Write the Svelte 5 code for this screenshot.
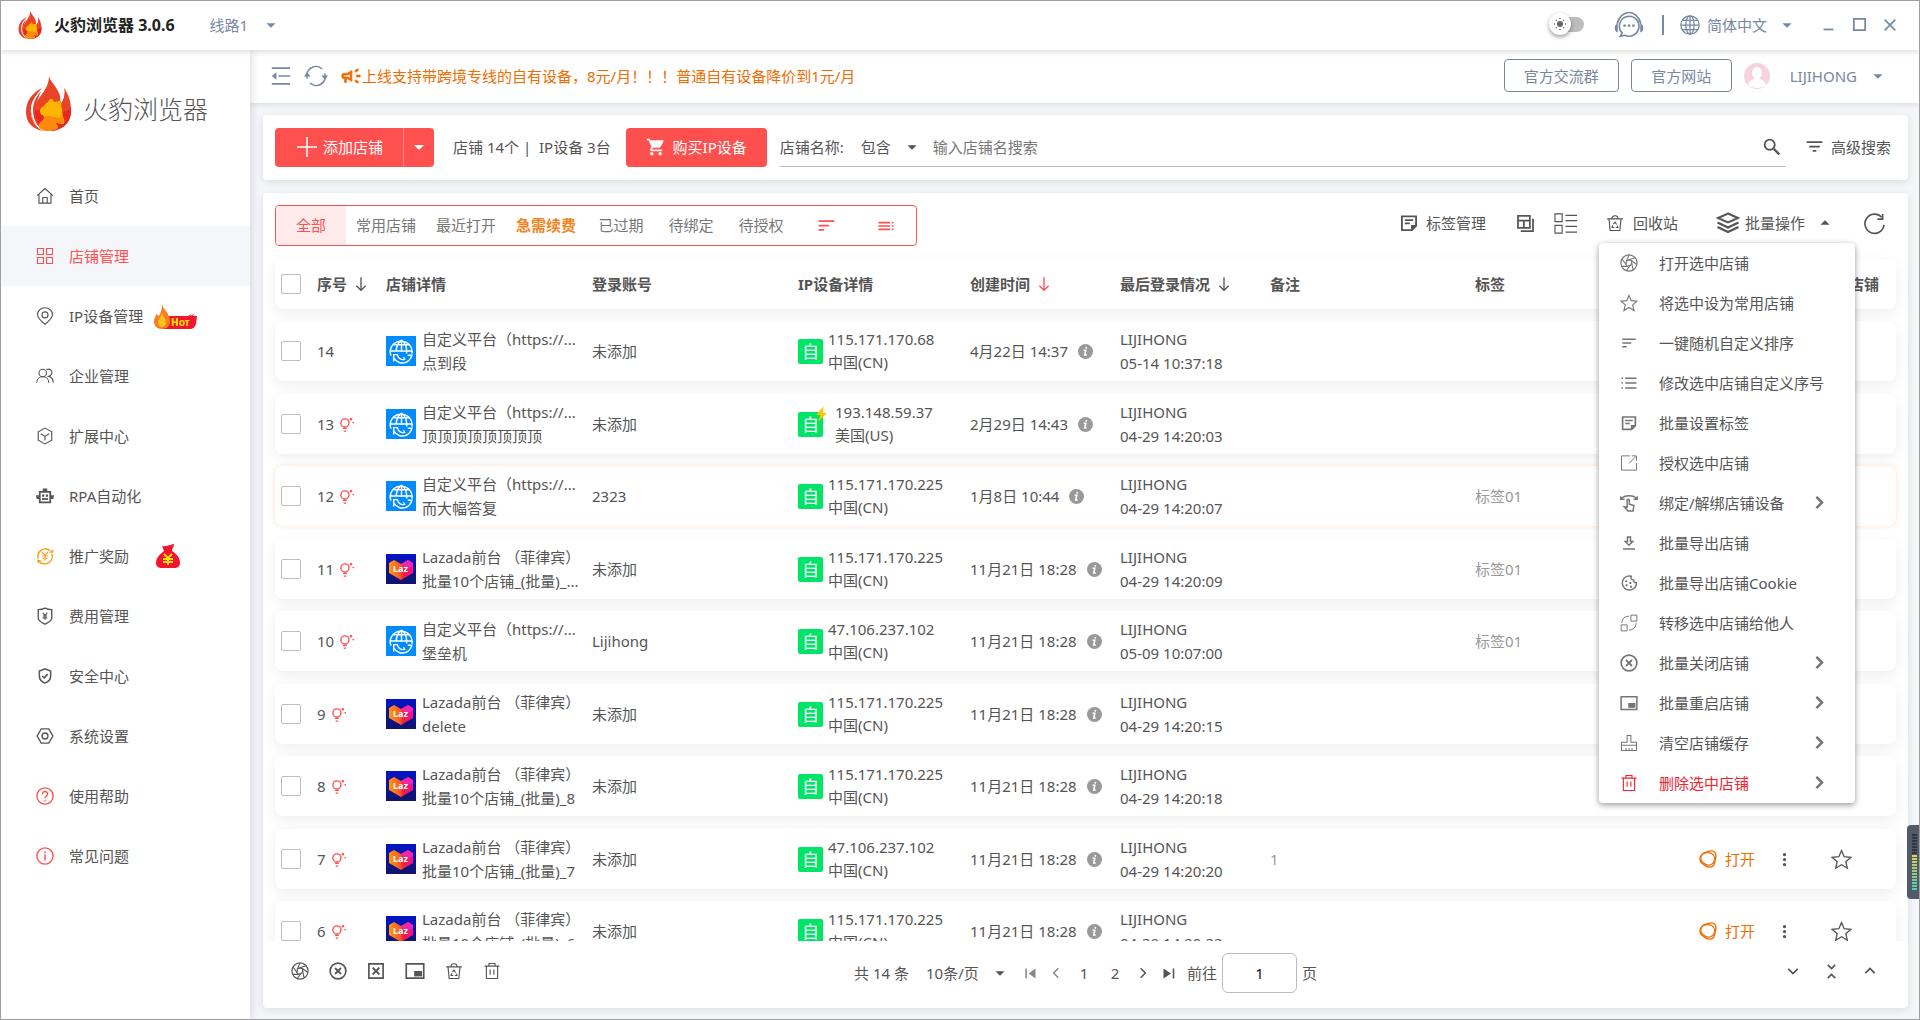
<script>
    const icons = {
        caret: '<path d="M7 10l5 5 5-5z" fill="currentColor" stroke="none"/>',
        caretUp: '<path d="M7 14l5-5 5 5z" fill="currentColor" stroke="none"/>',
        headset: '<path d="M2.500 11C4 5 8 2 12 2s8 3 9.500 9" stroke-width="1.300"/><path d="M3 10.500V18c-3-.5-3.500-6 0-7.500zM21 10.500V18c3-.5 3.500-6 0-7.500z" fill="currentColor" stroke="none"/><path d="M12 5a8 8 0 1 1-3.500 15.200L5 21l1.500-2.500A8 8 0 0 1 12 5z" stroke-width="1.300"/><path d="M7.500 12.500h2M11 12.500h2M14.500 12.500h2" stroke-width="1.800"/>',
        globe: '<circle cx="12" cy="12" r="11"/><ellipse cx="12" cy="12" rx="5" ry="11"/><path d="M12 1v22M1 12h22M3 6.500h18M3 17.500h18"/>',
        minimize: '<path d="M5 19h14" stroke-width="2.500"/>',
        maximize: '<path d="M4 4h16v16H4z" stroke-width="2.500"/>',
        close: '<path d="M4 4l16 16M20 4L4 20" stroke-width="2.500"/>',
        collapse: '<path d="M1 2.500h22M9 12h14M1 21.500h22" stroke-width="2"/><path d="M6.500 7.500v9L1 12z" fill="currentColor" stroke="none"/>',
        sync: '<path d="M3.300 14.500A9 9 0 0 1 18 5M20.700 9.500A9 9 0 0 1 6 19" stroke-width="1.600"/><path d="M0 12.500h6.500L3 8zM17.500 11.500H24L21 16z" fill="currentColor" stroke="none"/>',
        horn: '<path d="M18 11v2h4v-2h-4zm-2 6.610c.96.71 2.210 1.650 3.200 2.390.4-.53.8-1.070 1.200-1.600-.99-.74-2.240-1.680-3.200-2.400-.4.54-.8 1.080-1.200 1.610zM20.400 5.600c-.4-.53-.8-1.070-1.200-1.600-.99.74-2.240 1.680-3.200 2.400.4.53.8 1.070 1.200 1.600.96-.72 2.210-1.650 3.200-2.400zM4 9c-1.100 0-2 .9-2 2v2c0 1.100.9 2 2 2h1v4h2v-4h1l5 3V6L8 9H4zm5 1.700L11 9.500v5l-2.500-1.500H4v-2h4.500z" fill="currentColor" stroke-width="0.800"/>',
        plus: '<path d="M12 2v20M2 12h20"/>',
        cart: '<path d="M7 18c-1.100 0-2 .9-2 2s.9 2 2 2 2-.9 2-2-.9-2-2-2zM1 2v2h2l3.600 7.590-1.350 2.450C4.500 15.500 5.500 17 7 17h12v-2H7.400c-.2 0-.3-.2-.2-.4l.9-1.600h7.450c.75 0 1.410-.41 1.750-1.030l3.580-6.490A1 1 0 0 0 20 4H5.200l-.94-2H1zm16 16c-1.100 0-2 .9-2 2s.9 2 2 2 2-.9 2-2-.9-2-2-2z" fill="currentColor" stroke="none"/>',
        search: '<circle cx="9.500" cy="9.500" r="5.500" stroke-width="2"/><path d="M14 14l6 6" stroke-width="2.500"/>',
        filter: '<path d="M10 18h4v-2h-4v2zM3 6v2h18V6H3zm3 7h12v-2H6v2z" fill="currentColor" stroke="none"/>',
        sort: '<path d="M3 18h6v-2H3v2zM3 6v2h18V6H3zm0 7h12v-2H3v2z" fill="currentColor" stroke="none"/>',
        toc: '<path d="M3 9h14V7H3v2zm0 4h14v-2H3v2zm0 4h14v-2H3v2zm16 0h2v-2h-2v2zm0-10v2h2V7h-2zm0 6h2v-2h-2v2z" fill="currentColor" stroke="none"/>',
        note: '<path d="M3.500 4h17v11.500l-5 5h-12z" stroke-width="2.200"/><path d="M20.500 14.500v1l-5 5h-1v-6z" fill="currentColor" stroke="none"/><path d="M7 8.500h10M7 12.500h6" stroke-width="2"/>',
        columns: '<path d="M2.500 2.500h15v15h-15zM2.500 8.500h15M10 8.500v9" stroke-width="2.200"/><path d="M21.500 6v15.500H6" stroke-width="2.200"/>',
        grid: '<path d="M1 2h7.500v8H1zM1 14h7.500v8H1zM12 3.500h12M12 9h12M12 15h12M12 21h12" stroke-width="1.200"/>',
        recycle: '<path d="M1.500 6.500h21M4 6.500L5.500 22h13L20 6.500M8 6c0-5 8-5 8 0"/><path d="M12 10.500l-2 3M12 10.500l2.200 3.500M9 15l-1 3h3M13 18h3l-1-2.500"/>',
        layers: '<path d="M12 2.500l10 4.500-10 4.500L2 7z" stroke-width="2"/><path d="M1.500 11.500L12 16.500l10.500-5M1.500 16L12 21l10.500-5" stroke-width="2.200"/>',
        reload: '<path d="M22 13.500A10 10 0 1 1 19.500 5.500" stroke-width="1.700"/><path d="M20.500 2v5.500H15" stroke-width="1.700"/>',
        home: '<path d="M1.500 11.500L12 2l10.500 9.500M4 10v11.500h16V10M9 21v-7h6v7" stroke-linejoin="round"/>',
        shops: '<path d="M2 2h8v8H2zM14 2h8v8h-8zM2 14h8v8H2zM14 14h8v8h-8z"/>',
        pin: '<path d="M12 23c-5-4-10-8-10-13a10 9 0 0 1 20 0c0 5-5 9-10 13z"/><circle cx="12" cy="10.500" r="4"/>',
        users: '<circle cx="9" cy="8" r="5"/><path d="M1 21c0-5 3.500-8 8-8s8 3 8 8M14 3.500c4-2 8 1 7 5-.5 2-2 3.500-4 4 3.500 1 6 4 6 8.500"/>',
        cube: '<path d="M12 1.500l9 5v11l-9 5-9-5v-11zM6.500 9l5.500 3.500L17.500 9M12 12.500V18"/>',
        robot: '<path d="M5 6.500h14v14H5z" stroke-width="2.400"/><path d="M8 16h8" stroke-width="2.400"/><path d="M0 11h4v5H1zM20 11h4l-1 5h-3zM8 10h3v3H8zM13 10h3v3h-3zM9 2h6v4H9z" fill="currentColor" stroke="none"/>',
        reward: '<path d="M3 15.500A10 10 0 0 1 19 5M21 9a10 10 0 0 1-16.500 10.500" stroke-width="2"/><path d="M17 7.500h6V3zM1 16.500l6 1-4 4.500z" fill="currentColor" stroke="none"/><path d="M8 6.500l4 5 4-5M12 11.500V18M8.500 12h7M8.500 15h7"/>',
        fee: '<path d="M12 1.500c3 1.500 6 2 9 2V15c0 4-6 6-9 8-3-2-9-4-9-8V3.500c3 0 6-.5 9-2z" stroke-width="1.800"/><path d="M9 7.500l3 4 3-4M12 11.500V17M9 12h6M9 14.500h6"/>',
        shield: '<path d="M12 2.500l7.500 3V12c0 4.500-3.500 8-7.500 9.500C8 20 4.500 16.500 4.500 12V5.500z" stroke-width="2"/><path d="M8.500 12l2.500 2.500 4.500-5" stroke-width="2"/>',
        setting: '<path d="M7 2.500h10L22.500 12 17 21.500H7L1.500 12z" stroke-width="1.800"/><circle cx="12" cy="12" r="4" stroke-width="1.800"/>',
        help: '<circle cx="12" cy="12" r="10.800" stroke-width="1.800"/><path d="M8.500 9.500c0-5 7.500-4.500 7 0-.3 2.500-3.500 2.500-3.500 5.500M12 17v2" stroke-width="1.800"/>',
        info: '<circle cx="12" cy="12" r="10.800" stroke-width="1.800"/><path d="M12 6v2M12 10v8" stroke-width="2"/>',
        arrow: '<path d="M12 2v19M5 14.500l7 7 7-7" stroke-width="2"/>',
        bulb: '<circle cx="9.500" cy="9.500" r="6.500" stroke-width="2.200"/><path d="M6.500 18h6M7.500 22.500h4" stroke-width="2.200"/><path d="M19 1.500v4M17 3.500h4M21.500 9h2.500" stroke-width="2.200"/>',
        infoFill: '<circle cx="12" cy="12" r="12" fill="#999" stroke="none"/><path d="M13.500 4.500l-.6 2.800M9 10h3.500l-1.700 7.500H14" stroke="#fff" stroke-width="2.600"/>',
        aperture: '<circle cx="12" cy="12" r="10.800"/><path d="M12 1.500l-3.500 8M20 5l-9 3M22.500 14l-7-5M17.500 21l-2-9M8.500 22l5-7M2 16.500h8M3 7l5 7"/><path d="M8.500 9.500L11 8l4.500 1v4l-2 2.500-4 1L8 14z"/>',
        star: '<path d="M12 1.800l3 7 7.700.7-5.800 5 1.800 7.500-6.700-4-6.700 4 1.800-7.500-5.800-5L9 8.800z"/>',
        list: '<path d="M7 5.500h15M7 12h15M7 18.500h15M2 5.500h2M2 12h2M2 18.500h2" stroke-width="2"/>',
        share: '<path d="M13 2.500H2v19h20V12M12 12.500L21.500 3M15.500 2.500H22V9" stroke-width="1.300"/>',
        touch: '<path d="M1 3v4h5M1.500 6.500C6 1 18 1 22.500 6.500M23 3v4h-5" stroke-width="1.800"/><path d="M9.500 17.500V8.500c0-2 3-2 3 0v5l6 2-1 7h-7L5.500 17z" stroke-width="2"/>',
        download: '<path d="M10 4h4v6h3l-5 5-5-5h3zM4 20h16" stroke-width="2"/>',
        cookie: '<path d="M12 2.500a9.500 9.500 0 1 0 10 9c-3 0-4-1.500-4-3.500-3 0-4-2-3-5-1-.4-2-.5-3-.5z" stroke-width="2"/><path d="M7 9.500h2.500M7.500 15H10M13.500 17H16M12.500 12H15" stroke-width="2.400"/>',
        transfer: '<path d="M14.500 1.500h8v8h-8zM1.500 14.500h8v8h-8zM12 3C6 3 3 6 2.500 12M12 21.500c6-.5 9-3.500 9.500-9.500" stroke-width="1.300"/>',
        closeCircle: '<circle cx="12" cy="12" r="10.500" stroke-width="2.200"/><path d="M8 8l8 8M16 8l-8 8" stroke-width="2.400"/>',
        closeBox: '<path d="M2.500 2.500h19v19h-19z" stroke-width="2.200"/><path d="M7.500 7.500l9 9M16.500 7.500l-9 9" stroke-width="2.800"/>',
        pip: '<path d="M1.500 3.500h21v17h-21z" stroke-width="2"/><path d="M11 12h9.500v6.500H11z" fill="currentColor" stroke="none"/>',
        broom: '<path d="M9.500 11V2h5v9H22v11H2V11zM2 15h20M8 22v-3.500M12 22v-3.500M16 22v-3.500" stroke-width="1.400"/>',
        trash: '<path d="M2 5.500h20M8 5V2h8v3M4.500 5.500V22h15V5.500M9.500 10v7M14.500 10v7"/>',
        right: '<path d="M7 3l9 9-9 9" stroke-width="4"/>',
        chevDown: '<path d="M4 8.500l8 8 8-8" stroke-width="3"/>',
        chevUp: '<path d="M4 15.500l8-8 8 8" stroke-width="3"/>',
        fold: '<path d="M6 1.500l6 6 6-6M6 22.500l6-6 6 6" stroke-width="2.600"/>',
        first: '<path d="M5 4v16" stroke-width="2.500"/><path d="M20 4v16l-11-8z" fill="currentColor" stroke="none"/>',
        last: '<path d="M20 4v16" stroke-width="2.500"/><path d="M4 4v16l12-8z" fill="currentColor" stroke="none"/>',
        prev: '<path d="M16 4l-8 8 8 8" stroke-width="2.600"/>',
        next: '<path d="M8 4l8 8-8 8" stroke-width="2.600"/>',
        open: '<path d="M5 5C9 3 15-1 20 2c3 2 3 6 2 10s-1 9-5 10.500-9-1.500-13-5-3.500-9 1-12.500z" stroke-width="1.800"/><path d="M8 4c4-1 9-1 12 4s-1 11-5 12-12-3-12.500-8S5 5 8 4z" stroke-width="1.600"/>',
        more: '<g fill="currentColor" stroke="none"><circle cx="12" cy="4" r="2.600"/><circle cx="12" cy="12" r="2.600"/><circle cx="12" cy="20" r="2.600"/></g>',
        webShop: '<path d="M2 16A10.500 10 0 1 1 22 14M12 1v11.500M1.500 11.500h21M4.500 5.500h15M12 1C8 4 7 7 7 11.500M12 1c4 3 5 6 5 13" stroke-width="1.400"/><path d="M4.500 14.500v7M4.500 15h3.500c1 4 4 5.500 7 4.500l-1-2M5 18.500c2 4 7 5.500 11 4 3-1 5-3.500 6-7h-4" stroke-width="1.400"/>'
    };

    const navItems = [
        { icon: 'home', label: '首页' },
        { icon: 'shops', label: '店铺管理', active: true },
        { icon: 'pin', label: 'IP设备管理', badge: 'hot' },
        { icon: 'users', label: '企业管理' },
        { icon: 'cube', label: '扩展中心' },
        { icon: 'robot', label: 'RPA自动化' },
        { icon: 'reward', label: '推广奖励', tone: 'amber', badge: 'bag' },
        { icon: 'fee', label: '费用管理' },
        { icon: 'shield', label: '安全中心' },
        { icon: 'setting', label: '系统设置' },
        { icon: 'help', label: '使用帮助', tone: 'red' },
        { icon: 'info', label: '常见问题', tone: 'red' }
    ];

    const batchItems = [
        { icon: 'aperture', label: '打开选中店铺' },
        { icon: 'star', label: '将选中设为常用店铺' },
        { icon: 'sort', label: '一键随机自定义排序' },
        { icon: 'list', label: '修改选中店铺自定义序号' },
        { icon: 'note', label: '批量设置标签' },
        { icon: 'share', label: '授权选中店铺' },
        { icon: 'touch', label: '绑定/解绑店铺设备', more: true },
        { icon: 'download', label: '批量导出店铺' },
        { icon: 'cookie', label: '批量导出店铺Cookie' },
        { icon: 'transfer', label: '转移选中店铺给他人' },
        { icon: 'closeCircle', label: '批量关闭店铺', more: true },
        { icon: 'pip', label: '批量重启店铺', more: true },
        { icon: 'broom', label: '清空店铺缓存', more: true },
        { icon: 'trash', label: '删除选中店铺', more: true, danger: true }
    ];

    const custom = '自定义平台（https://...';
    const lazada = 'Lazada前台 （菲律宾）';

    const rows = [
        { no: 14, kind: 'web', shop: custom, name: '点到段', account: '未添加', ip: '115.171.170.68', area: '中国(CN)', created: '4月22日 14:37', login: '05-14 10:37:18' },
        { no: 13, kind: 'web', shop: custom, name: '顶顶顶顶顶顶顶顶', account: '未添加', ip: '193.148.59.37', area: '美国(US)', fast: true, created: '2月29日 14:43', login: '04-29 14:20:03' },
        { no: 12, kind: 'web', shop: custom, name: '而大幅答复', account: '2323', ip: '115.171.170.225', area: '中国(CN)', created: '1月8日 10:44', login: '04-29 14:20:07', tag: '标签01' },
        { no: 11, kind: 'laz', shop: lazada, name: '批量10个店铺_(批量)_...', account: '未添加', ip: '115.171.170.225', area: '中国(CN)', created: '11月21日 18:28', login: '04-29 14:20:09', tag: '标签01' },
        { no: 10, kind: 'web', shop: custom, name: '堡垒机', account: 'Lijihong', ip: '47.106.237.102', area: '中国(CN)', created: '11月21日 18:28', login: '05-09 10:07:00', tag: '标签01' },
        { no: 9, kind: 'laz', shop: lazada, name: 'delete', account: '未添加', ip: '115.171.170.225', area: '中国(CN)', created: '11月21日 18:28', login: '04-29 14:20:15' },
        { no: 8, kind: 'laz', shop: lazada, name: '批量10个店铺_(批量)_8', account: '未添加', ip: '115.171.170.225', area: '中国(CN)', created: '11月21日 18:28', login: '04-29 14:20:18' },
        { no: 7, kind: 'laz', shop: lazada, name: '批量10个店铺_(批量)_7', account: '未添加', ip: '47.106.237.102', area: '中国(CN)', created: '11月21日 18:28', login: '04-29 14:20:20', remark: '1' },
        { no: 6, kind: 'laz', shop: lazada, name: '批量10个店铺_(批量)_6', account: '未添加', ip: '115.171.170.225', area: '中国(CN)', created: '11月21日 18:28', login: '04-29 14:20:22' }
    ];

    const tabs = ['全部', '常用店铺', '最近打开', '急需续费', '已过期', '待绑定', '待授权'];

    let activeTab = $state('全部');
    let menuOpen = $state(true);
    let hovered = $state(12);
    let keyword = $state('');
    let page = $state(1);
</script>

{#snippet icon(name, size)}
    <svg class="icon" viewBox="0 0 24 24" width={size} height={size} aria-hidden="true">{@html icons[name]}</svg>
{/snippet}

{#snippet flame(width, height)}
    <svg class="flame" viewBox="0 0 45 55" {width} {height} aria-hidden="true">
        <path d="M17 55C6 53 0 46 0 36 0 25 6 17 16 12 8 21 4 29 5 38c1 8 6 14 12 17z" fill="#e8402a" />
        <path d="M15 52C8 48 4 41 5 33c1-7 5-12 10-18-2 6-5 11-5 18 0 8 2 14 5 19z" fill="#e8402a" />
        <path d="M5 33c0 9 4 16 10 20C9 47 7 41 7 34c0-7 3-13 8-19-6 5-10 11-10 18z" fill="#fff" />
        <path d="M23 0c2 8 12 13 12 27 3-4 4-9 3-15 5 7 7 14 7 23 0 12-9 20-22 20C14 55 9 44 9 34 9 21 23 16 23 0z" fill="#ea4428" />
        <path d="M35 27c3-4 4-9 3-15l-2-1c1 5 0 9-2 12z" fill="#fff" />
        <path d="M9 34c0 10 4 19 14 21 13 0 22-8 22-20v-4c-4 6-10 5-16 5z" fill="#e6281f" />
        <path d="M24 23c2-1 3 0 4 3l6-1c1 2 2 3 1 5 2 4 1 8 2 11 1 2 2 4 1 6-1 2-4 1-6 0-1-1-2-1-3 0 2 1 3 3 3 5-8 5-17 3-19-1-1-5 6-6 5-10-1-3-4-1-4-6 0-3 2-4 4-5 1-3 4-3 6-7z" fill="#ffb400" />
        <path d="M18 41c5-3 12 2 18 0l2 5c0 2-4 1-6 1l-3 0c2 1 3 3 3 5-8 5-17 3-19-1 0-4 5-6 5-10z" fill="#ff8a0c" />
    </svg>
{/snippet}

<div class="window">
    <header class="titlebar">
        {@render flame(24, 28)}
        <strong class="app-name">火豹浏览器 3.0.6</strong>
        <label class="pick line-pick">
            <select aria-label="线路"><option>线路1</option></select>
            {@render icon('caret', 22)}
        </label>
        <div class="window-tools">
            <label class="theme">
                <input type="checkbox" aria-label="主题" />
                <span class="thumb">
                    <svg viewBox="0 0 22 22" width="22" height="22" aria-hidden="true">
                        <circle cx="11" cy="11" r="3" fill="#666" />
                        <path d="M11 5v1M11 16v1M5 11h1M16 11h1M7 7l.7.7M14.300 14.300l.7.7M7 15l.7-.7M14.300 7.700L15 7" stroke="#666" stroke-width="1.400" />
                    </svg>
                </span>
            </label>
            <button class="plain headset" aria-label="客服">{@render icon('headset', 30)}</button>
            <span class="divider"></span>
            {@render icon('globe', 20)}
            <label class="pick lang-pick">
                <select aria-label="语言"><option>简体中文</option></select>
                {@render icon('caret', 22)}
            </label>
            <div class="window-buttons">
                <button class="plain" aria-label="最小化">{@render icon('minimize', 17)}</button>
                <button class="plain" aria-label="最大化">{@render icon('maximize', 17)}</button>
                <button class="plain" aria-label="关闭">{@render icon('close', 16)}</button>
            </div>
        </div>
    </header>

    <div class="body">
        <aside class="sidebar">
            <div class="brand">
                {@render flame(45, 55)}
                <span>火豹浏览器</span>
            </div>
            <nav>
                {#each navItems as item}
                    <a href="#{item.icon}" class:active={item.active}>
                        <span class="nav-icon {item.tone}">{@render icon(item.icon, 18)}</span>
                        {item.label}
                        {#if item.badge === 'hot'}
                            <svg class="hot" viewBox="0 0 43 25" width="43" height="25" aria-hidden="true">
                                <path d="M10 12h24l3-2-1 2 4-2-1 2h4l-1 8c-1 3-3 5-6 5H8z" fill="#f5142d" />
                                <path d="M8 0c1 6 8 9 8 17 0 5-3 8-8 8s-8-3-8-8c0-3 2-4 2-7l3 2c2-4 3-7 3-12z" fill="#f77f1e" />
                                <path d="M8 9c1 4 4 5 4 10 0 2-2 4-4 4s-4-2-4-5 3-4 4-9z" fill="#ffc21e" />
                                <text x="17" y="22" font-size="10" font-weight="800" fill="#ffe600">H<tspan font-size="8">OT</tspan></text>
                            </svg>
                        {:else if item.badge === 'bag'}
                            <svg class="bag" viewBox="0 0 24 24" width="24" height="24" aria-hidden="true">
                                <path d="M6 2c4 1 5-1 9-1 1-1 2-1 3-1 0 3-2 4-2 7 5 3 8 7 8 12 0 4-3 5-6 5H6c-3 0-6-1-6-5 0-5 4-9 8-12z" fill="#f5142d" />
                                <path d="M8 10l4 4 4-4M12 14v7M7 15h10M7 18h10" fill="none" stroke="#ffe600" stroke-width="1.800" />
                            </svg>
                        {/if}
                    </a>
                {/each}
            </nav>
        </aside>

        <main>
            <div class="topbar">
                <button class="plain" aria-label="收起菜单">{@render icon('collapse', 20)}</button>
                <button class="plain sync" aria-label="刷新">{@render icon('sync', 24)}</button>
                <p class="notice">
                    {@render icon('horn', 22)}
                    <span>上线支持带跨境专线的自有设备，8元/月！！！普通自有设备降价到1元/月</span>
                </p>
                <button class="outline wide">官方交流群</button>
                <button class="outline">官方网站</button>
                <button class="plain user">
                    <svg viewBox="0 0 26 26" width="26" height="26" aria-hidden="true">
                        <circle cx="13" cy="13" r="13" fill="#f6d3df" />
                        <ellipse cx="13" cy="10" rx="5" ry="6" fill="#fff" />
                        <path d="M4 22c1-5 5-5 7-7h4c2 2 6 2 7 7-2 2-5 3-9 3s-7-1-9-3z" fill="#fff" />
                    </svg>
                    <span>LIJIHONG</span>
                    {@render icon('caret', 22)}
                </button>
            </div>

            <section class="card search-card">
                <div class="split">
                    <button class="add">{@render icon('plus', 24)}添加店铺</button>
                    <button class="add-more" aria-label="更多">{@render icon('caret', 24)}</button>
                </div>
                <span class="count">店铺 14个 |&nbsp; IP设备 3台</span>
                <button class="buy">{@render icon('cart', 20)}购买IP设备</button>
                <div class="search">
                    <label for="keyword">店铺名称:</label>
                    <label class="pick match-pick">
                        <select aria-label="匹配方式"><option>包含</option></select>
                        {@render icon('caret', 22)}
                    </label>
                    <input id="keyword" type="text" placeholder="输入店铺名搜索" bind:value={keyword} />
                    <button class="plain" aria-label="搜索">{@render icon('search', 22)}</button>
                </div>
                <button class="plain advanced">{@render icon('filter', 21)}高级搜索</button>
            </section>

            <section class="card list-card">
                <div class="toolbar">
                    <div class="tabs">
                        {#each tabs as tab}
                            <button
                                class:active={tab === activeTab}
                                class:long={tab.length > 3}
                                class:urgent={tab === '急需续费'}
                                onclick={() => (activeTab = tab)}>{tab}</button>
                        {/each}
                        <button class="sort" aria-label="排序">{@render icon('sort', 21)}</button>
                        <button class="sort" aria-label="列表">{@render icon('toc', 20)}</button>
                    </div>
                    <div class="tools">
                        <button class="plain tag-tool">{@render icon('note', 20)}标签管理</button>
                        <button class="plain" aria-label="列设置">{@render icon('columns', 19)}</button>
                        <button class="plain grid-tool" aria-label="视图">{@render icon('grid', 23)}</button>
                        <button class="plain bin-tool">{@render icon('recycle', 18)}回收站</button>
                        <div class="batch">
                            <button class="plain" onclick={() => (menuOpen = !menuOpen)}>
                                {@render icon('layers', 24)}<span>批量操作</span>{@render icon('caretUp', 22)}
                            </button>
                            {#if menuOpen}
                                <ul class="menu">
                                    {#each batchItems as item}
                                        <li>
                                            <button class="plain" class:danger={item.danger}>
                                                <span class="menu-icon">{@render icon(item.icon, 18)}</span>
                                                {item.label}
                                                {#if item.more}
                                                    <span class="menu-more">{@render icon('right', 15)}</span>
                                                {/if}
                                            </button>
                                        </li>
                                    {/each}
                                </ul>
                            {/if}
                        </div>
                        <button class="plain" aria-label="重新加载">{@render icon('reload', 23)}</button>
                    </div>
                </div>

                <div class="table-wrap">
                    <table>
                        <thead>
                            <tr>
                                <th><input type="checkbox" aria-label="全选" /></th>
                                <th>序号{@render icon('arrow', 16)}</th>
                                <th>店铺详情</th>
                                <th>登录账号</th>
                                <th>IP设备详情</th>
                                <th>创建时间<span class="sorted">{@render icon('arrow', 16)}</span></th>
                                <th>最后登录情况{@render icon('arrow', 16)}</th>
                                <th>备注</th>
                                <th>标签</th>
                                <th>操作</th>
                                <th>常用店铺</th>
                            </tr>
                        </thead>
                        <tbody>
                            {#each rows as row}
                                <tr class:hovered={row.no === hovered} onmouseenter={() => (hovered = row.no)}>
                                    <td><input type="checkbox" aria-label="选择 {row.no}" /></td>
                                    <td class="no">
                                        {row.no}
                                        {#if row.no !== 14}{@render icon('bulb', 15)}{/if}
                                    </td>
                                    <td class="shop">
                                        {#if row.kind === 'web'}
                                            <span class="logo web">{@render icon('webShop', 25)}</span>
                                        {:else}
                                            <svg class="logo" viewBox="0 0 30 30" width="30" height="30" aria-hidden="true">
                                                <defs>
                                                    <linearGradient id="heart"><stop offset="0" stop-color="#ff9a00" /><stop offset=".45" stop-color="#fb5a2e" /><stop offset=".6" stop-color="#f0203c" /><stop offset="1" stop-color="#f50a9c" /></linearGradient>
                                                    <linearGradient id="night" x2="0" y2="1"><stop offset="0" stop-color="#0214c8" /><stop offset="1" stop-color="#10146a" /></linearGradient>
                                                </defs>
                                                <path d="M0 0h30v30H0z" fill="url(#night)" />
                                                <path d="M3 9l5-3 7 4 7-4 5 3v10L15 26 3 19z" fill="url(#heart)" />
                                                <path d="M15 10l7-4 5 3v3l-7 3z" fill="#f02ad0" opacity=".7" />
                                                <text x="7" y="18" font-size="9" font-weight="700" fill="#fff">Laz</text>
                                            </svg>
                                        {/if}
                                        <div>
                                            <div>{row.shop}</div>
                                            <div>{row.name}</div>
                                        </div>
                                    </td>
                                    <td>{row.account}</td>
                                    <td class="device" class:fast={row.fast}>
                                        <span class="own">自
                                            {#if row.fast}
                                                <svg class="bolt" viewBox="0 0 10 14" width="11" height="16" aria-hidden="true"><path d="M7 0L0 8h4l-2 6 8-8H6z" fill="#ffc400" /></svg>
                                            {/if}
                                        </span>
                                        <div>
                                            <div>{row.ip}</div>
                                            <div>{row.area}</div>
                                        </div>
                                    </td>
                                    <td class="created">{row.created}{@render icon('infoFill', 15)}</td>
                                    <td class="login">
                                        <div>
                                            <div>LIJIHONG</div>
                                            <div>{row.login}</div>
                                        </div>
                                    </td>
                                    <td class="muted">{row.remark ?? ''}</td>
                                    <td class="muted">{row.tag ?? ''}</td>
                                    <td class="actions">
                                        <button class="plain open">{@render icon('open', 18)}打开</button>
                                        <button class="plain" aria-label="更多">{@render icon('more', 15)}</button>
                                    </td>
                                    <td class="fav"><button class="plain" aria-label="设为常用">{@render icon('star', 21)}</button></td>
                                </tr>
                            {/each}
                        </tbody>
                    </table>
                </div>

                <footer>
                    <div class="bulk">
                        <button class="plain" aria-label="打开">{@render icon('aperture', 18)}</button>
                        <button class="plain" aria-label="关闭店铺">{@render icon('closeCircle', 18)}</button>
                        <button class="plain" aria-label="全部关闭">{@render icon('closeBox', 18)}</button>
                        <button class="plain" aria-label="重启">{@render icon('pip', 20)}</button>
                        <button class="plain" aria-label="回收">{@render icon('recycle', 18)}</button>
                        <button class="plain" aria-label="删除">{@render icon('trash', 18)}</button>
                    </div>
                    <div class="pager">
                        <span>共 14 条</span>
                        <label class="pick size-pick">
                            <select aria-label="每页条数"><option>10条/页</option></select>
                            {@render icon('caret', 22)}
                        </label>
                        <button class="plain dim" aria-label="首页">{@render icon('first', 15)}</button>
                        <button class="plain dim" aria-label="上一页">{@render icon('prev', 14)}</button>
                        <button class="plain num">1</button>
                        <button class="plain num">2</button>
                        <button class="plain" aria-label="下一页">{@render icon('next', 14)}</button>
                        <button class="plain" aria-label="末页">{@render icon('last', 15)}</button>
                        <label class="jump">前往<input type="text" bind:value={page} />页</label>
                    </div>
                    <div class="folds">
                        <button class="plain" aria-label="向下">{@render icon('chevDown', 14)}</button>
                        <button class="plain" aria-label="折叠">{@render icon('fold', 15)}</button>
                        <button class="plain" aria-label="向上">{@render icon('chevUp', 14)}</button>
                    </div>
                </footer>
            </section>
        </main>
    </div>

    <div class="meter"><span></span></div>
</div>

<style>
    :global(body) {
        margin: 0;
    }

    .window {
        position: relative;
        box-sizing: border-box;
        height: 100vh;
        display: flex;
        flex-direction: column;
        border: 1px solid #a0a0a0;
        background: #f5f6fa;
        overflow: hidden;
        color: #555;
        font-family: "Noto Sans", "Noto Sans CJK SC", sans-serif;
        font-size: 15px;
        line-height: 24px;
    }

    .window :global(.icon) {
        display: block;
        flex-shrink: 0;
        fill: none;
        stroke: currentColor;
        stroke-width: 1.5;
    }

    button,
    input,
    select {
        font: inherit;
        color: inherit;
        margin: 0;
    }

    button {
        cursor: pointer;
        white-space: nowrap;
    }

    .plain {
        display: flex;
        align-items: center;
        padding: 0;
        border: none;
        background: none;
    }

    .pick {
        display: flex;
        align-items: center;
    }

    .pick select {
        appearance: none;
        border: none;
        background: none;
        padding: 0;
        outline: none;
    }

    /* title bar */
    .titlebar {
        display: flex;
        align-items: center;
        height: 49px;
        flex-shrink: 0;
        box-sizing: border-box;
        padding: 0 21px 2px 17px;
        background: #fff;
        box-shadow: 0 2px 6px rgba(0, 0, 0, 0.14);
        color: #7888a2;
        z-index: 3;
    }

    .flame {
        flex-shrink: 0;
    }

    .app-name {
        margin-left: 12px;
        color: #222;
        font-size: 16px;
    }

    .line-pick {
        margin-left: 35px;
        gap: 11px;
    }

    .window-tools {
        display: flex;
        align-items: center;
        margin-left: auto;
    }

    .theme {
        position: relative;
        width: 35px;
        height: 15px;
        border-radius: 8px;
        background: linear-gradient(90deg, transparent 10px, #bdbdbd 10px);
    }

    .theme input {
        position: absolute;
        inset: 0;
        opacity: 0;
    }

    .thumb {
        position: absolute;
        top: -4px;
        left: 0;
        width: 22px;
        height: 22px;
        border-radius: 50%;
        background: #fff;
        box-shadow: 0 2px 4px rgba(0, 0, 0, 0.4);
    }

    .headset {
        margin-left: 30px;
    }

    .divider {
        width: 2px;
        height: 20px;
        margin: 0 16px 0 18px;
        background: #7888a2;
    }

    .lang-pick {
        margin-left: 7px;
        gap: 8px;
    }

    .window-buttons {
        display: flex;
        align-items: center;
        gap: 14px;
        margin-left: 22px;
    }

    .body {
        display: flex;
        flex: 1;
        min-height: 0;
    }

    /* sidebar */
    .sidebar {
        width: 249px;
        flex-shrink: 0;
        background: #fff;
        box-shadow: 2px 0 8px rgba(0, 0, 0, 0.12);
        z-index: 2;
    }

    .brand {
        display: flex;
        align-items: center;
        gap: 12px;
        height: 90px;
        padding: 8px 0 18px 25px;
        font-size: 25px;
        font-weight: 300;
    }

    .brand span {
        padding-top: 12px;
    }

    nav a {
        display: flex;
        align-items: center;
        height: 60px;
        padding-left: 35px;
        color: #555;
        text-decoration: none;
    }

    nav a.active {
        background: #f5f6fa;
        color: #ff5050;
    }

    .nav-icon {
        margin-right: 15px;
    }

    .nav-icon.amber {
        color: #ff9f1a;
    }

    .nav-icon.red {
        color: #ff5050;
    }

    .hot {
        margin-left: 11px;
    }

    .bag {
        margin-left: 27px;
    }

    /* top bar */
    main {
        display: flex;
        flex-direction: column;
        flex: 1;
        min-width: 0;
    }

    .topbar {
        display: flex;
        align-items: center;
        box-sizing: border-box;
        height: 53px;
        flex-shrink: 0;
        padding: 0 30px 2px 21px;
        background: #fff;
        box-shadow: 0 2px 6px rgba(0, 0, 0, 0.1);
        color: #7888a2;
    }

    .sync {
        margin-left: 13px;
    }

    .notice {
        display: flex;
        align-items: center;
        flex: 1;
        min-width: 0;
        margin: 0 0 0 12px;
        color: #ef6c00;
    }

    .outline {
        width: 101px;
        height: 33px;
        margin-right: 12px;
        padding: 0;
        border: 1px solid #7888a2;
        border-radius: 4px;
        background: #fff;
    }

    .outline.wide {
        width: 115px;
    }

    .user span {
        margin: 0 10px 0 20px;
    }

    .card {
        margin: 12px 11px 0 13px;
        padding: 0 12px;
        background: #fff;
        border-radius: 4px;
        box-shadow: 0 2px 8px rgba(0, 0, 0, 0.1);
    }

    .search-card {
        display: flex;
        align-items: center;
        height: 65px;
        flex-shrink: 0;
    }

    .split {
        display: flex;
    }

    .add,
    .add-more,
    .buy {
        display: flex;
        align-items: center;
        justify-content: center;
        height: 39px;
        padding: 0 0 2px;
        border: none;
        border-radius: 4px;
        background: #ff5050;
        color: #fff;
    }

    .add {
        width: 128px;
        gap: 4px;
        border-radius: 4px 0 0 4px;
    }

    .add-more {
        width: 31px;
        border-left: 1px solid #ff9090;
        border-radius: 0 4px 4px 0;
    }

    .count {
        margin: 0 15px 0 19px;
        padding-bottom: 2px;
        white-space: nowrap;
    }

    .buy {
        width: 141px;
        gap: 7px;
    }

    .search {
        display: flex;
        align-items: center;
        flex: 1;
        height: 38px;
        margin: 0 18px 0 13px;
        padding-right: 3px;
        border-bottom: 1px solid #bbb;
    }

    .match-pick {
        gap: 9px;
        margin-left: 17px;
    }

    .search input {
        flex: 1;
        min-width: 0;
        margin-left: 10px;
        padding: 0;
        border: none;
        outline: none;
        background: none;
    }

    .search input::placeholder {
        color: #777;
    }

    .advanced {
        gap: 6px;
        margin-right: 5px;
        padding-bottom: 2px;
    }

    /* shop list */
    .list-card {
        display: flex;
        flex-direction: column;
        flex: 1;
        min-height: 0;
        margin: 13px 11px 11px 13px;
    }

    .toolbar {
        display: flex;
        justify-content: space-between;
        flex-shrink: 0;
        padding-top: 12px;
    }

    .tabs {
        display: flex;
        height: 39px;
        border: 1px solid #ff5050;
        border-radius: 4px;
        overflow: hidden;
    }

    .tabs button {
        display: flex;
        align-items: center;
        justify-content: center;
        width: 70px;
        padding: 0 0 2px;
        border: none;
        background: none;
        color: #777;
    }

    .tabs .long {
        width: 80px;
    }

    .tabs .sort {
        width: 60px;
        padding: 0;
        color: #ff5050;
    }

    .tabs .urgent {
        color: #f58220;
        font-weight: 700;
    }

    .tabs .active {
        background: #ffebeb;
        color: #ff5050;
    }

    .tools {
        display: flex;
        align-items: center;
        height: 36px;
        padding-right: 10px;
    }

    .tag-tool {
        gap: 7px;
        margin-right: 30px;
    }

    .grid-tool {
        margin: 0 29px 0 19px;
    }

    .bin-tool {
        gap: 9px;
        margin-right: 38px;
    }

    .batch {
        position: relative;
        margin-right: 27px;
    }

    .batch > button {
        gap: 5px;
    }

    .batch > button span {
        margin-right: 4px;
    }

    .menu {
        position: absolute;
        top: 32px;
        right: -19px;
        width: 256px;
        margin: 0;
        padding: 0;
        list-style: none;
        background: #fff;
        border-radius: 4px;
        box-shadow: 0 2px 6px rgba(0, 0, 0, 0.4);
        z-index: 5;
    }

    .menu button {
        width: 100%;
        height: 40px;
        padding: 0 28px 1px 21px;
    }

    .menu .danger {
        color: #f5222d;
    }

    .menu-icon {
        margin-right: 21px;
        color: #757575;
    }

    .danger .menu-icon {
        color: #f5222d;
    }

    .menu-more {
        margin-left: auto;
        color: #757575;
    }

    .table-wrap {
        flex: 1;
        min-height: 0;
        margin: 0 -12px;
        padding: 0 12px;
        overflow: hidden;
    }

    table,
    tbody,
    thead {
        display: block;
    }

    tr {
        display: grid;
        grid-template-columns: 42px 69px 206px 206px 172px 150px 150px 205px 1fr 120px 77px;
        align-items: center;
        height: 60px;
        margin-bottom: 12px;
        border-radius: 8px;
        background: #fff;
        box-shadow: 0 4px 14px rgba(0, 0, 0, 0.07);
    }

    thead tr {
        height: 50px;
        margin-top: 13px;
    }

    tbody tr:nth-child(odd) {
        margin-bottom: 13px;
    }

    tr.hovered {
        box-shadow: 0 0 5px rgba(239, 108, 0, 0.22);
    }

    th,
    td {
        display: flex;
        align-items: center;
        padding: 0;
        text-align: left;
        white-space: nowrap;
    }

    th :global(.icon) {
        margin-left: 6px;
    }

    .sorted {
        color: #ff5050;
    }

    td input,
    th input {
        appearance: none;
        box-sizing: border-box;
        width: 20px;
        height: 20px;
        margin-left: 6px;
        border: 1px solid #bdbdbd;
        border-radius: 2px;
    }

    .no {
        gap: 5px;
    }

    .no :global(.icon) {
        color: #ff5050;
    }

    .logo {
        flex-shrink: 0;
        margin-right: 6px;
    }

    .logo.web {
        display: flex;
        align-items: center;
        justify-content: center;
        width: 30px;
        height: 30px;
        background: #008cff;
        color: #fff;
    }

    .device {
        line-height: 23px;
    }

    .own {
        position: relative;
        width: 25px;
        margin-right: 5px;
        border-radius: 2px;
        background: #00e468;
        color: #fff;
        font-size: 17px;
        line-height: 25px;
        text-align: center;
    }

    .fast .own {
        margin-right: 12px;
    }

    .bolt {
        position: absolute;
        top: -6px;
        right: -4px;
    }

    .created {
        gap: 10px;
    }

    .muted {
        color: #999;
    }

    .actions {
        gap: 22px;
    }

    .open {
        gap: 8px;
        color: #ef6c00;
    }

    .fav {
        padding-left: 12px;
    }

    /* footer */
    footer {
        display: grid;
        grid-template-columns: 1fr auto 1fr;
        align-items: center;
        box-sizing: border-box;
        height: 67px;
        flex-shrink: 0;
        padding-bottom: 3px;
    }

    .bulk {
        display: flex;
        align-items: center;
        gap: 20px;
        padding: 0 0 4px 16px;
    }

    .pager {
        display: flex;
        align-items: center;
        gap: 11px;
    }

    .size-pick {
        gap: 10px;
        margin: 0 1px 0 6px;
    }

    .num {
        justify-content: center;
        width: 20px;
    }

    .dim {
        color: #888;
    }

    .jump {
        display: flex;
        align-items: center;
        gap: 5px;
    }

    .jump input {
        box-sizing: border-box;
        width: 75px;
        height: 40px;
        padding: 0;
        border: 1px solid #bbb;
        border-radius: 6px;
        color: #111;
        text-align: center;
    }

    .folds {
        display: flex;
        align-items: center;
        justify-content: flex-end;
        gap: 24px;
        padding: 0 19px 4px 0;
    }

    /* volume meter docked on the right edge */
    .meter {
        position: absolute;
        top: 824px;
        right: -1px;
        box-sizing: border-box;
        width: 13px;
        height: 74px;
        padding: 9px 3px 8px 5px;
        border-radius: 4px 0 0 4px;
        background: #525a6a;
        z-index: 4;
    }

    .meter span {
        display: block;
        height: 100%;
        background:
            repeating-linear-gradient(transparent 0 2px, #525a6a 2px 3px),
            linear-gradient(#30343e 35%, #e8d44a 36%, #8fd07a 70%, #3fd6c0);
    }
</style>
